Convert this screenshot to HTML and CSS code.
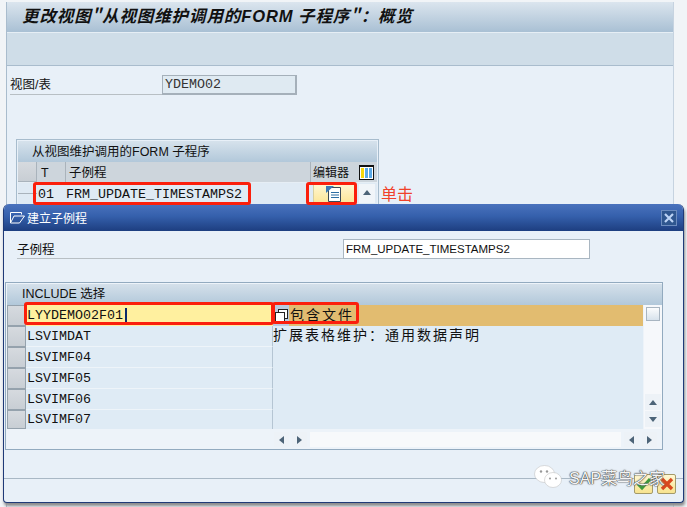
FILE: index.html
```html
<!DOCTYPE html>
<html lang="zh">
<head>
<meta charset="utf-8">
<title>更改视图</title>
<link rel="stylesheet" href="styles.css">
</head>
<body>
<div class="screen">
  <header class="titlebar"><h1>更改视图"从视图维护调用的<b>FORM</b> 子程序"：概览</h1></header>
  <div class="toolbar"></div>
  <div class="fieldrow">
    <span class="fieldlabel">视图/表</span>
    <span class="input ro">YDEMO02</span>
  </div>
  <section class="tc">
    <div class="tctitle">从视图维护调用的FORM 子程序</div>
    <div class="tchead">
      <span class="sel"></span>
      <span class="hc t">T</span>
      <span class="hc name">子例程</span>
      <span class="hc ed">编辑器</span>
      <svg class="cfg" width="15" height="15" viewBox="0 0 15 15"><rect x=".5" y=".5" width="14" height="14" fill="#fff" stroke="#111"/><rect x="2" y="3" width="3" height="10" fill="#f6d70a"/><rect x="6" y="3" width="3" height="10" fill="#5aa9e6"/><rect x="10" y="3" width="3" height="10" fill="#5aa9e6"/><path d="M1 1.500h13" stroke="#111"/></svg>
    </div>
    <div class="tcrow">
      <span class="sel"></span>
      <span class="cell t mono">01</span>
      <span class="cell name mono">FRM_UPDATE_TIMESTAMPS2</span>
      <span class="edbtn">
        <svg width="16" height="16" viewBox="0 0 16 16"><path d="M2.500 1.500h12v14h-12z" fill="#fff" stroke="#3b4a57"/><path d="M0 0h8L0 7z" fill="#3c79b5"/><path d="M5 6.500h8M5 9h8M5 11.500h8" stroke="#2d6da3"/></svg>
      </span>
      <span class="vup"><i class="tri up"></i></span>
    </div>
  </section>
</div>

<div class="note">单击</div>

<div class="dialog">
  <div class="dtitle">
    <svg class="dicon" width="15" height="12" viewBox="0 0 15 12"><path d="M.5.500h11v2M.5.500v10.500h9l5-7H4l-3 6" fill="none" stroke="#fff"/></svg>
    <span>建立子例程</span>
    <span class="dclose"><svg width="10" height="10" viewBox="0 0 10 10"><path d="M1 1l8 8M9 1l-8 8" stroke="#bcd3f5" stroke-width="2.200"/></svg></span>
  </div>
  <div class="dbody">
    <div class="drow">
      <span class="dlabel">子例程</span>
      <span class="input wh">FRM_UPDATE_TIMESTAMPS2</span>
    </div>
    <section class="group">
      <div class="gtitle">INCLUDE 选择</div>
      <div class="gmain">
        <div class="rows">
          <div class="row on"><span class="sel"></span><span class="c1 cur mono">LYYDEMO02F01<i class="caret"></i></span><span class="c2 act"><span class="f4"><svg width="13" height="13" viewBox="0 0 13 13"><rect x="3.500" y=".5" width="9" height="9" fill="#fff" stroke="#222"/><rect x=".5" y="3.500" width="9" height="9" fill="#fff" stroke="#222"/></svg></span><span class="cjk">包含文件</span></span></div>
          <div class="row"><span class="sel"></span><span class="c1 mono">LSVIMDAT</span><span class="c2"><span class="cjk">扩展表格维护：通用数据声明</span></span></div>
          <div class="row"><span class="sel"></span><span class="c1 mono">LSVIMF04</span><span class="c2"></span></div>
          <div class="row"><span class="sel"></span><span class="c1 mono">LSVIMF05</span><span class="c2"></span></div>
          <div class="row"><span class="sel"></span><span class="c1 mono">LSVIMF06</span><span class="c2"></span></div>
          <div class="row"><span class="sel"></span><span class="c1 mono">LSVIMF07</span><span class="c2"></span></div>
        </div>
        <div class="vbar">
          <span class="vtop"></span>
          <span class="vtrack"></span>
          <span class="vbtn"><i class="tri up"></i></span>
          <span class="vbtn"><i class="tri down"></i></span>
        </div>
      </div>
      <div class="hbar">
        <span class="hbtn"><i class="tri left"></i></span>
        <span class="hbtn"><i class="tri right"></i></span>
        <span class="htrack"></span>
        <span class="hbtn"><i class="tri left"></i></span>
        <span class="hbtn"><i class="tri right"></i></span>
      </div>
    </section>
    <div class="dsep"></div>
  </div>
</div>

<div class="actions">
  <span class="abtn"><svg width="16" height="14" viewBox="0 0 16 14"><path d="M2 7l4 4 8-9" fill="none" stroke="#3f9a3a" stroke-width="3"/></svg></span>
  <span class="abtn"><svg width="14" height="14" viewBox="0 0 14 14"><path d="M2 2l10 10M12 2L2 12" stroke="#d8491f" stroke-width="3.400"/></svg></span>
</div>

<div class="mark">
  <svg width="28" height="24" viewBox="0 0 28 24"><ellipse cx="10.500" cy="9" rx="10" ry="8.500" fill="#fff" stroke="#bbb" stroke-width=".5"/><ellipse cx="19" cy="15" rx="8.500" ry="7.500" fill="#fff" stroke="#bbb" stroke-width=".5"/><circle cx="7" cy="6.500" r="1.200" fill="#999"/><circle cx="13" cy="6.500" r="1.200" fill="#999"/><circle cx="16" cy="13.500" r="1" fill="#999"/><circle cx="22" cy="13.500" r="1" fill="#999"/></svg>
  <span>SAP菜鸟之家</span>
</div>

<div class="hl h1"></div>
<div class="hl h2"></div>
<div class="hl h3"></div>
<div class="hl h4"></div>
</body>
</html>
```
FILE: styles.css
```css
* { box-sizing: border-box; }
html, body { margin: 0; padding: 0; }
body {
  width: 687px; height: 507px; overflow: hidden; position: relative;
  background: #f1f4f7;
  font-family: "Liberation Sans", "Noto Sans CJK SC", sans-serif;
  font-size: 13px; color: #111;
}
.mono { font-family: "Liberation Mono", "Noto Sans CJK SC", monospace; font-size: 13.33px; }
.cjk { font-family: "Noto Sans CJK SC", sans-serif; font-size: 14px; letter-spacing: 2px; line-height: 21px; height: 21px; margin-top: -4px; }

.screen { margin: 2px 13px 0 6px; height: 505px; background: #e8f0f8; border-right: 1px solid #c6d3e0; border-left: 1px solid #a9bccd; }
.titlebar { height: 31px; background: linear-gradient(#dbe5ee, #a9c0d4); display: flex; align-items: center; padding: 0 0 4px 15px; border-bottom: 1px solid #e6eef5; }
.titlebar h1 { margin: 0; font: italic 700 16.500px "Noto Sans CJK SC", sans-serif; letter-spacing: .9px; color: #111; white-space: nowrap; }
.titlebar b { font-family: "Liberation Sans", sans-serif; }
.toolbar { height: 33px; background: #cfdde8; border-bottom: 1px solid #a9bccd; }

.fieldrow { display: flex; align-items: center; margin: 9px 0 0 3px; height: 20px; }
.fieldlabel { width: 152px; height: 20px; line-height: 20px; font-size: 12.500px; border-bottom: 1px solid #b8bfc4; }
.input { display: block; height: 20px; line-height: 18px; padding-left: 2px; border: 1px solid #a9b6c1; white-space: nowrap; }
.ro { width: 135px; background: #dfeaf2; font-family: "Liberation Mono", monospace; font-size: 13.33px; color: #333; border-color: #a5b0ba; border-width: 1px 2px 2px 1px; }
.wh { width: 247px; background: #fff; font-size: 11.500px; }

.tc { margin: 44px 0 0 9px; width: 363px; border: 1px solid #a7bccd; border-width: 1px 1px 0; height: 66px; padding: 1px; }
.tctitle { height: 21px; line-height: 22px; padding-left: 14px; background: linear-gradient(#d6e2ec, #b2c8da); font-size: 12.500px; white-space: nowrap; }
.tchead { display: flex; height: 21px; background: #cdd5dc; border-bottom: 1px solid #e6eef5; align-items: stretch; position: relative; }
.sel { flex: none; display: block; width: 19px; background: linear-gradient(#d6dadf, #c8ced4); border: 1px solid #a9b3bc; border-width: 0 1px 1px 0; }
.hc { display: block; line-height: 23px; font-size: 12.500px; padding-left: 3px; border-right: 1px solid #aab3bb; }
.hc.t { width: 29px; padding-left: 4px; }
.hc.name { width: 245px; }
.hc.ed { width: 64px; padding-left: 2px; border-right: 0; font-size: 12px; }
.cfg { position: absolute; left: 341px; top: 3px; }
.tcrow { display: flex; height: 21px; background: #dfeaf4; align-items: center; }
.cell { display: block; line-height: 20px; padding-top: 2px; }
.cell.t { width: 29px; padding-left: 1px; }
.cell.name { width: 244px; white-space: nowrap; }
.edbtn { width: 42px; height: 19px; margin-left: 3px; background: linear-gradient(#fff6d0, #fde79a); border: 1px solid #d8cf9f; display: flex; align-items: center; justify-content: center; }
.vup { width: 16px; height: 19px; margin-left: 4px; padding-bottom: 3px; background: #f1f5f9; display: flex; align-items: center; justify-content: center; }

.tri { display: block; width: 0; height: 0; border: solid transparent; }
.tri.up { border-width: 0 4px 5px; border-bottom-color: #4d6478; }
.tri.down { border-width: 5px 4px 0; border-top-color: #4d6478; }
.tri.left { border-width: 4px 5px 4px 0; border-right-color: #4d6478; }
.tri.right { border-width: 4px 0 4px 5px; border-left-color: #4d6478; }

.note { position: absolute; left: 381px; top: 181px; font: 16px "Noto Sans CJK SC", sans-serif; color: #f0422a; }

.dialog { position: absolute; left: 3px; top: 204px; width: 681px; height: 299px; background: #e8f0f8; border: 1px solid #1f3a78; border-top: 0; border-radius: 6px 6px 4px 4px; box-shadow: 1px 3px 3px #8b8b8b; overflow: hidden; }
.dtitle { height: 27px; background: linear-gradient(#4a72bd, #3560ac 45%, #1d3e80); display: flex; align-items: center; padding: 0 6px 0 6px; color: #fff; font-size: 12px; gap: 2px; }
.dclose { margin-left: auto; width: 16px; height: 16px; background: #2f568f; border: 1px solid #6c8cbf; display: flex; align-items: center; justify-content: center; }
.drow { display: flex; align-items: center; height: 20px; margin: 8px 0 0 13px; }
.dlabel { width: 326px; height: 20px; line-height: 22px; font-size: 12.500px; border-bottom: 1px solid #b8bfc4; }
.group { margin: 23px 0 0 1px; width: 658px; height: 168px; border: 1px solid #92aabf; padding: 1px 0 0 1px; background: #edf3f9; }
.gtitle { height: 21px; line-height: 20px; padding-left: 15px; background: linear-gradient(#d4e0ea, #b2c8da); font-size: 12.500px; }
.gmain { display: flex; }
.rows { width: 636px; }
.row { display: flex; height: 21px; background: #dfebf5; }
.row:last-child { height: 19px; }
.row .sel { width: 19px; border: 1px solid #95a2ad; }
.c1 { display: flex; align-items: center; width: 247px; padding-left: 1px; border-right: 1px solid #b5c5d3; border-bottom: 1px solid #eef4f9; white-space: nowrap; }
.row:last-child .c1 { border-bottom: 0; }
.c1.cur { background: #fff09f; border-right: 0; border-bottom: 0; }
.caret { display: block; width: 2px; height: 15px; background: #0b2a6a; margin-left: 2px; }
.c2 { display: flex; align-items: center; flex: 1; min-width: 0; white-space: nowrap; }
.c2.act { background: #e2bc70; }
.f4 { width: 16px; height: 21px; flex: none; display: flex; align-items: center; justify-content: center; background: #b9cbe0; }
.c2.act .cjk { padding-left: 1px; margin-top: -2px; }
.vbar { width: 18px; margin-left: 1px; background: #f6f8fb; display: flex; flex-direction: column; align-items: center; }
.vtop { width: 14px; height: 14px; border: 1px solid #a8b5c1; background: linear-gradient(#fbfcfd, #d7e2ec); margin-top: 2px; flex: none; }
.vtrack { flex: 1; }
.vbtn { width: 16px; height: 16px; flex: none; display: flex; align-items: center; justify-content: center; background: #edf2f7; margin-bottom: 1px; }
.vbtn:last-child { margin-bottom: 2px; }
.hbar { display: flex; margin: 3px 0 0 267px; height: 15px; gap: 3px; width: 383px; }
.hbtn { width: 15px; flex: none; background: #edf2f7; display: flex; align-items: center; justify-content: center; }
.htrack { flex: 1; background: #f7f9fb; }
.dsep { margin-top: 28px; height: 1px; background: #a9b8c5; }

.actions { position: absolute; left: 634px; top: 474px; display: flex; gap: 4px; }
.abtn { width: 19px; height: 20px; background: linear-gradient(#fff8d4, #f7e38f); border: 1px solid #a39a6a; border-radius: 2px; display: flex; align-items: center; justify-content: center; }

.mark { position: absolute; left: 534px; top: 465px; display: flex; align-items: center; gap: 7px; color: #f4f4f4; font-size: 16px; text-shadow: 0 0 1px #333, 0 0 1px #333, 0 0 2px #777; white-space: nowrap; }

.hl { position: absolute; border: 3px solid #fb1f0c; border-radius: 3px; }
.h1 { left: 33px; top: 182px; width: 218px; height: 23px; }
.h2 { left: 306px; top: 182px; width: 51px; height: 23px; }
.h3 { left: 24px; top: 302px; width: 250px; height: 23px; }
.h4 { left: 272px; top: 302px; width: 87px; height: 22px; }
```
